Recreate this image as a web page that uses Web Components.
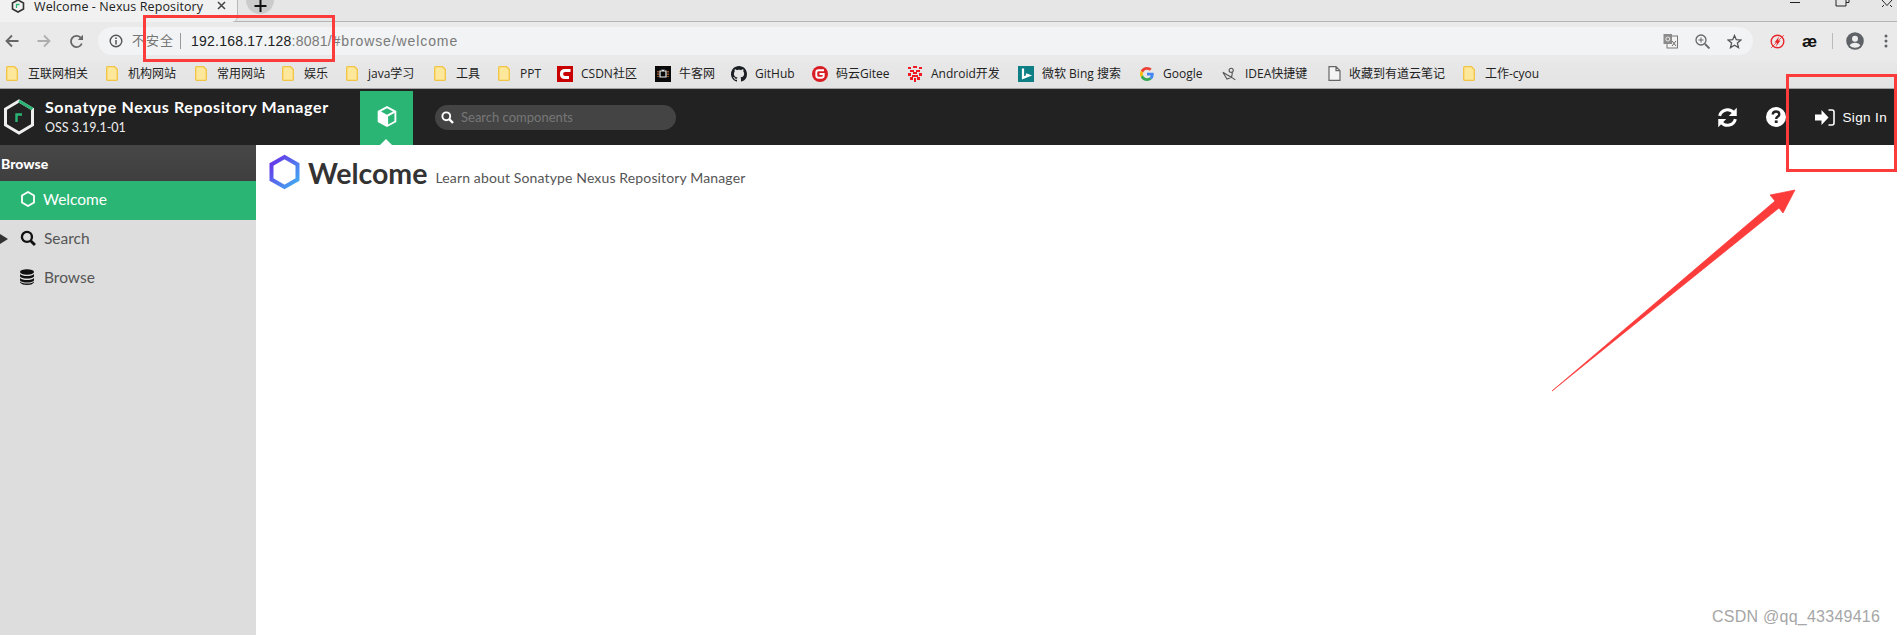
<!DOCTYPE html>
<html lang="en">
<head>
<meta charset="utf-8">
<title>Welcome - Nexus Repository Manager</title>
<style>
  html, body { margin: 0; height: 100%; overflow: hidden; background: #fff; }
  body { display: flex; flex-direction: column; height: 635px; position: relative; }
</style>
</head>
<body>
<browser-top></browser-top>
<bookmark-bar></bookmark-bar>
<nexus-header></nexus-header>
<nexus-main></nexus-main>
<shot-marks></shot-marks>

<script>
(function (w, doc) {
  'use strict';

  const CJK = '"Noto Sans CJK SC", sans-serif';
  const CHROME_FONT = '"Open Sans", ' + CJK;
  const NX_FONT = 'Lato, "Noto Sans", sans-serif';

  const folder = '<svg width="12" height="15" viewBox="0 0 12 15"><path d="M.7 1.5Q.7.7 1.5.7H8.5L11.3 3.5V13.5Q11.3 14.3 10.5 14.3H1.5Q.7 14.3.7 13.5Z" fill="#fde79a" stroke="#f2c443" stroke-width="1.3"/></svg>';

  const logos = {
    folder,
    csdn: '<svg width="16" height="16" viewBox="0 0 16 16"><rect width="16" height="16" fill="#c90000"/><path d="M13.5 4.5H8Q4.5 4.5 4.5 8T8 11.5H12" fill="none" stroke="#fff" stroke-width="3.2"/></svg>',
    nowcoder: '<svg width="16" height="16" viewBox="0 0 16 16"><rect width="16" height="16" fill="#0a0a0a"/><path d="M5 5H11V11H5Z" fill="none" stroke="#eee" stroke-width="1.2"/><path d="M3 5V11M13 5V11" stroke="#e9843a" stroke-width="1.2" stroke-dasharray="1.5 1"/><path d="M7 3.5L8 5L9 3.5" fill="none" stroke="#fff"/></svg>',
    github: '<svg width="16" height="16" viewBox="0 0 16 16"><path fill="#1b1f23" d="M8 0C3.58 0 0 3.58 0 8c0 3.54 2.29 6.53 5.47 7.59.4.07.55-.17.55-.38 0-.19-.01-.82-.01-1.49-2.01.37-2.53-.49-2.69-.94-.09-.23-.48-.94-.82-1.13-.28-.15-.68-.52-.01-.53.63-.01 1.08.58 1.23.82.72 1.21 1.87.87 2.33.66.07-.52.28-.87.51-1.07-1.78-.2-3.64-.89-3.64-3.95 0-.87.31-1.59.82-2.15-.08-.2-.36-1.02.08-2.12 0 0 .67-.21 2.2.82.64-.18 1.32-.27 2-.27s1.36.09 2 .27c1.53-1.04 2.2-.82 2.2-.82.44 1.1.16 1.92.08 2.12.51.56.82 1.27.82 2.15 0 3.07-1.87 3.75-3.65 3.95.29.25.54.73.54 1.48 0 1.07-.01 1.93-.01 2.2 0 .21.15.46.55.38A8.01 8.01 0 0 0 16 8c0-4.42-3.58-8-8-8z"/></svg>',
    gitee: '<svg width="16" height="16" viewBox="0 0 16 16"><circle cx="8" cy="8" r="8" fill="#d81e24"/><path d="M12 4.3H6.5Q4.3 4.3 4.3 6.5V9.5Q4.3 11.7 6.5 11.7H9.5Q11.7 11.7 11.7 9.5V8H7.5" fill="none" stroke="#fff" stroke-width="1.9"/></svg>',
    android: '<svg width="16" height="16" viewBox="0 0 16 16" fill="#ef1c25"><path d="M1 1h3v2H1zM6 0h4v2H6zM12 1h3v2h-3zM3 4h4v2H3zM9 4h4v2H9zM6 6h4v2H6zM1 7h3v3H1zM12 7h3v3h-3zM5 9h6v2H5zM3 11h3v3H3zM10 11h3v3h-3zM7 12h2v4H7z"/></svg>',
    bing: '<svg width="16" height="16" viewBox="0 0 16 16"><rect width="16" height="16" fill="#0f7f86"/><path d="M5 2.5V11.8L11 9.5L8 8.3" fill="none" stroke="#fff" stroke-width="2.2"/></svg>',
    google: '<svg width="14" height="14" viewBox="0 0 48 48"><path fill="#EA4335" d="M24 9.5c3.54 0 6.71 1.22 9.21 3.6l6.85-6.85C35.9 2.38 30.47 0 24 0 14.62 0 6.51 5.38 2.56 13.22l7.98 6.19C12.43 13.72 17.74 9.5 24 9.5z"/><path fill="#4285F4" d="M46.98 24.55c0-1.57-.15-3.09-.38-4.55H24v9.02h12.94c-.58 2.96-2.26 5.48-4.78 7.18l7.73 6c4.51-4.18 7.09-10.36 7.09-17.65z"/><path fill="#FBBC05" d="M10.53 28.59c-.48-1.45-.76-2.99-.76-4.59s.27-3.14.76-4.59l-7.98-6.19C.92 16.46 0 20.12 0 24c0 3.88.92 7.54 2.56 10.78l7.97-6.19z"/><path fill="#34A853" d="M24 48c6.48 0 11.93-2.13 15.89-5.81l-7.73-6c-2.15 1.45-4.92 2.3-8.16 2.3-6.26 0-11.57-4.22-13.47-9.91l-7.98 6.19C6.51 42.62 14.62 48 24 48z"/></svg>',
    idea: '<svg width="18" height="16" viewBox="0 0 18 16" fill="none" stroke="#555" stroke-width="1.3"><circle cx="11" cy="3.5" r="2.5"/><path d="M12.5 6L11.5 12L6 9L1 6M1 6L6 14L11.5 12L16 15"/></svg>',
    doc: '<svg width="13" height="15" viewBox="0 0 13 15"><path d="M1 .7H8L12 4.7V14.3H1Z M8 .7V4.7H12" fill="#f4f4f4" stroke="#666" stroke-width="1.2"/></svg>'
  };

  const tabTpl = doc.createElement('template');
  tabTpl.innerHTML = `
    <style>
      :host { display: block; height: 60px; background: #e6e6e6; font-family: ${CHROME_FONT}; position: relative; }
      .strip { height: 21px; display: flex; border-bottom: 1px solid #b4b4b4; }
      .tab { width: 238px; height: 22px; background: #f1f1f1; border-bottom-right-radius: 6px; display: flex; align-items: flex-start; box-sizing: border-box; padding-left: 11px; position: relative; z-index: 1; border-right: 1px solid #b8b8b8; margin-bottom: -1px; }
      .tab svg.fav { margin-right: 9px; margin-top: -1px; flex: none; }
      .tab .ttl { width: 168px; white-space: nowrap; font-size: 12.5px; line-height: 13px; color: #222; letter-spacing: .1px; }
      .tab .x { margin-left: 15px; margin-top: 1px; }
      .new { width: 28px; height: 14px; background: #cbcbcb; border-radius: 0 0 14px 14px; margin-left: 8px; display: flex; justify-content: center; }
      .win { margin-left: auto; display: flex; }
      .win svg { display: block; }
      .bar { display: flex; align-items: center; box-sizing: border-box; height: 39px; padding-bottom: 1px; position: relative; background: #eaeaea; }
      .nav { width: 98px; flex: none; position: relative; height: 28px; display: flex; align-items: center; padding-left: 5px; gap: 18px; box-sizing: border-box; }
      .omni { flex: none; width: 1655px; height: 28px; background: #f1f3f4; border-radius: 14px; display: flex; align-items: center; box-sizing: border-box; padding-left: 11px; }
      .warn { color: #757575; font-size: 13px; line-height: 16px; margin: 0 0 3px 9px; letter-spacing: 1px; }
      .sep { width: 1px; height: 16px; background: #999; margin: 0 10px 0 6px; }
      .url { font-size: 14px; font-family: "Liberation Sans", Arial, sans-serif; letter-spacing: .23px; color: #222; white-space: nowrap; }
      .url span { color: #7a7a7a; }
      .url i { font-style: normal; letter-spacing: .9px; }
      .tools { margin-left: auto; display: flex; align-items: center; gap: 17px; padding-right: 11px; }
      .ext { position: absolute; left: 1770px; top: 5px; height: 28px; display: flex; align-items: center; }
      .ae { font: bold 17px "Liberation Sans", sans-serif; color: #111; margin-left: 17px; line-height: 1; }
      .vline { width: 1px; height: 16px; background: #bbb; margin: 0 13px 0 15px; }
    </style>
    <div class="strip">
      <div class="tab">
        <svg class="fav" width="14" height="14" viewBox="0 0 14 14"><path d="M7 1L12.5 4V10L7 13L1.5 10V4Z" fill="none" stroke="#333" stroke-width="1.6"/><path d="M5.5 9V5.5H8.5" fill="none" stroke="#2ab574" stroke-width="1.3"/></svg>
        <div class="ttl">Welcome - Nexus Repository</div>
        <svg class="x" width="9" height="9" viewBox="0 0 9 9"><path d="M1 1L8 8M8 1L1 8" stroke="#444" stroke-width="1.5"/></svg>
      </div>
      <div class="new"><svg width="13" height="13" viewBox="0 0 13 13"><path d="M6.5 0V12M.5 6H12.5" stroke="#111" stroke-width="2"/></svg></div>
      <div class="win">
        <svg width="297" height="12" viewBox="0 0 297 12"><path d="M190 2.5H200" stroke="#222"/><path d="M236 0V6H246V0M246 2.5H249V0" fill="none" stroke="#222"/><path d="M282 0L287 5.5L292 0M282 7L284 5M292 7L290 5" fill="none" stroke="#222"/></svg>
      </div>
    </div>
    <div class="bar">
      <div class="nav">
        <svg width="14" height="14" viewBox="0 0 14 14"><path d="M13.5 7H2M7 1.5L1.5 7L7 12.5" fill="none" stroke="#666" stroke-width="1.8"/></svg>
        <svg width="14" height="14" viewBox="0 0 14 14"><path d="M.5 7H12M7 1.5L12.5 7L7 12.5" fill="none" stroke="#aeaeae" stroke-width="1.8"/></svg>
        <svg width="15" height="15" viewBox="0 0 15 15"><path d="M12.8 9.5A5.6 5.6 0 1 1 11.5 3.5" fill="none" stroke="#666" stroke-width="1.8"/><path d="M14 .8V6H8.8Z" fill="#666"/></svg>
      </div>
      <div class="omni">
        <svg width="14" height="14" viewBox="0 0 14 14"><circle cx="7" cy="7" r="5.8" fill="none" stroke="#555" stroke-width="1.4"/><path d="M7 6V10.5" stroke="#555" stroke-width="1.5"/><circle cx="7" cy="4.2" r=".9" fill="#555"/></svg>
        <span class="warn">不安全</span>
        <span class="sep"></span>
        <span class="url">192.168.17.128<span>:8081<i>/#browse/welcome</i></span></span>
        <div class="tools">
          <svg width="15" height="15" viewBox="0 0 15 15"><rect x="4" y="2" width="10.5" height="12" fill="#f3f3f3" stroke="#777"/><rect x=".5" y="0" width="8.5" height="10" fill="#8b8b8b"/><circle cx="4.8" cy="5" r="2" fill="none" stroke="#eee"/><path d="M9 7L13 12M13 7L9 12" stroke="#666"/></svg>
          <svg width="15" height="15" viewBox="0 0 15 15"><circle cx="6" cy="6" r="5" fill="none" stroke="#666" stroke-width="1.3"/><path d="M10 10L14.5 14.5" stroke="#666" stroke-width="1.8"/><path d="M3.5 6H8.5M6 3.5V8.5" stroke="#666"/></svg>
          <svg width="15" height="15" viewBox="0 0 15 15"><path d="M7.5 1.5L9.3 5.7L13.9 6.1L10.4 9.1L11.5 13.6L7.5 11.2L3.5 13.6L4.6 9.1L1.1 6.1L5.7 5.7Z" fill="none" stroke="#555" stroke-width="1.3"/></svg>
        </div>
      </div>
      <div class="ext">
        <svg width="15" height="15" viewBox="0 0 15 15"><circle cx="7.5" cy="7.5" r="6.3" fill="none" stroke="#e8262a" stroke-width="1.4"/><path d="M9 2.5L4.5 8.5H7L6 12.5L10.5 6.5H8Z" fill="#e8262a"/><path d="M1 14L14 1" stroke="#e8262a" stroke-width=".7"/></svg>
        <span class="ae">æ</span>
        <span class="vline"></span>
        <svg width="18" height="18" viewBox="0 0 18 18"><circle cx="9" cy="9" r="8.8" fill="#5f6368"/><circle cx="9" cy="6.8" r="3" fill="#eee"/><path d="M3.7 13.5Q5 10.8 9 10.8T14.3 13.5Q12.5 15.8 9 15.8T3.7 13.5Z" fill="#eee"/></svg>
        <svg style="margin-left:20px" width="4" height="14" viewBox="0 0 4 14" fill="#5f6368"><circle cx="2" cy="2" r="1.5"/><circle cx="2" cy="7" r="1.5"/><circle cx="2" cy="12" r="1.5"/></svg>
      </div>
    </div>`;

  class BrowserTop extends HTMLElement {
    constructor() {
      super();
      this.attachShadow({ mode: 'open' }).appendChild(tabTpl.content.cloneNode(true));
    }
  }
  customElements.define('browser-top', BrowserTop);

  class BookMark extends HTMLElement {
    constructor() {
      super();
      const root = this.attachShadow({ mode: 'open' });
      root.innerHTML = `
        <style>
          :host { display: flex; align-items: center; flex: none; height: 16px; gap: 8px; font: 12px/16px ${CHROME_FONT}; color: #222; white-space: nowrap; }
          .ic { display: flex; width: var(--ic, 16px); flex: none; }
        </style>
        <span class="ic"></span><slot></slot>`;
    }
    connectedCallback() {
      const kind = this.getAttribute('icon');
      this.shadowRoot.querySelector('.ic').innerHTML = logos[kind] || '';
      this.style.setProperty('--ic', (this.getAttribute('iw') || 16) + 'px');
      this.style.width = this.getAttribute('w') + 'px';
    }
  }
  customElements.define('book-mark', BookMark);

  // name, icon, slot width to the next bookmark, icon box
  const marks = [
    ['互联网相关', 'folder', 100, 14], ['机构网站', 'folder', 89, 14], ['常用网站', 'folder', 87, 14],
    ['娱乐', 'folder', 64, 14], ['java学习', 'folder', 88, 14], ['工具', 'folder', 64, 14],
    ['PPT', 'folder', 59, 14], ['CSDN社区', 'csdn', 98, 16], ['牛客网', 'nowcoder', 76, 16],
    ['GitHub', 'github', 81, 16], ['码云Gitee', 'gitee', 95, 16], ['Android开发', 'android', 111, 16],
    ['微软 Bing 搜索', 'bing', 122, 16], ['Google', 'google', 82, 15], ['IDEA快捷键', 'idea', 106, 15],
    ['收藏到有道云笔记', 'doc', 135, 13], ['工作-cyou', 'folder', 90, 14]
  ];

  class BookmarkBar extends HTMLElement {
    constructor() {
      super();
      const root = this.attachShadow({ mode: 'open' });
      root.innerHTML = `
        <style>
          :host { display: flex; align-items: center; flex: none; box-sizing: border-box; height: 29px; padding: 0 0 1px 6px; background: linear-gradient(#e8e8e8, #e3e3e3); border-bottom: 1px solid #a3a3a3; }
        </style>`;
      marks.forEach((m) => {
        const el = doc.createElement('book-mark');
        el.setAttribute('icon', m[1]);
        el.setAttribute('w', m[2]);
        el.setAttribute('iw', m[3]);
        el.textContent = m[0];
        root.appendChild(el);
      });
    }
  }
  customElements.define('bookmark-bar', BookmarkBar);

  const headTpl = doc.createElement('template');
  headTpl.innerHTML = `
    <style>
      :host { display: flex; flex: none; height: 56px; background: #222; color: #fff; font-family: ${NX_FONT}; align-items: center; }
      .logo { width: 45px; flex: none; display: flex; padding-left: 3px; box-sizing: border-box; }
      .brand { width: 315px; flex: none; }
      .brand b { display: block; font-size: 16px; line-height: 18px; font-weight: 700; letter-spacing: .62px; }
      .brand span { display: block; font-size: 12.5px; line-height: 16px; margin-top: 4px; color: #eee; }
      .cube { width: 53px; height: 54px; align-self: flex-end; background: #2ab574; flex: none; display: flex; align-items: center; justify-content: center; position: relative; padding-bottom: 4px; box-sizing: border-box; }
      .cube::after { content: ""; position: absolute; left: 20px; bottom: 0; border: 6px solid transparent; border-top: 0; border-bottom-color: #fff; }
      .find { margin-left: 22px; width: 241px; height: 25px; border-radius: 13px; background: #444; display: flex; align-items: center; padding-left: 6px; box-sizing: border-box; gap: 7px; font-size: 13px; color: #777; }
      .right { margin-left: auto; display: flex; align-items: center; }
      .signin { font: 13.5px "Liberation Sans", sans-serif; margin: 0 10px 0 8px; letter-spacing: .35px; }
    </style>
    <div class="logo">
      <svg width="32" height="36" viewBox="0 0 32 36"><path d="M16 2L29.5 10V26L16 34L2.5 26V10Z" fill="none" stroke="#eee" stroke-width="3"/><path d="M16 2L29.5 10" stroke="#2ab574" stroke-width="3"/><path d="M13.5 23V15.5H19" fill="none" stroke="#2ab574" stroke-width="2.4"/></svg>
    </div>
    <div class="brand"><b>Sonatype Nexus Repository Manager</b><span>OSS 3.19.1-01</span></div>
    <div class="cube">
      <svg width="22" height="23" viewBox="0 0 20 21"><path d="M10 1L18.5 5.5V15.5L10 20L1.5 15.5V5.5Z" fill="#fff"/><path d="M10 3L15.5 6L10 9L4.5 6Z" fill="#2ab574"/><path d="M11 10.5L16.8 7.3V14.5L11 17.7Z" fill="#2ab574"/></svg>
    </div>
    <div class="find">
      <svg width="13" height="13" viewBox="0 0 13 13"><circle cx="5.3" cy="5.3" r="3.9" fill="none" stroke="#fff" stroke-width="1.9"/><path d="M8.2 8.2L12 12" stroke="#fff" stroke-width="2.4"/></svg>
      Search components
    </div>
    <div class="right">
      <svg width="21" height="21" viewBox="0 0 20 20" fill="none"><path d="M2.5 8.5A7.7 7.7 0 0 1 16 5.5" stroke="#fff" stroke-width="2.9"/><path d="M18.8 .8V8.5H11.2Z" fill="#fff"/><path d="M17.5 11.5A7.7 7.7 0 0 1 4 14.5" stroke="#fff" stroke-width="2.9"/><path d="M1.2 19.2V11.5H8.8Z" fill="#fff"/></svg>
      <svg style="margin-left:28px" width="20" height="20" viewBox="0 0 20 20"><circle cx="10" cy="10" r="10" fill="#fff"/><path d="M6.7 7.5Q7 4.5 10.1 4.5Q13.3 4.5 13.3 7.2Q13.3 8.7 11.7 9.6Q10.2 10.5 10.2 12" fill="none" stroke="#222" stroke-width="2.4"/><rect x="8.8" y="13.4" width="2.8" height="2.6" fill="#222"/></svg>
      <svg style="margin-left:29px" width="20" height="17" viewBox="0 0 20 17"><path d="M0 5.5H6.5V1L13.5 8.5L6.5 16V11.5H0Z" fill="#fff"/><path d="M13.5 1H17Q19 1 19 3V14Q19 16 17 16H13.5" fill="none" stroke="#fff" stroke-width="1.6"/></svg>
      <span class="signin">Sign In</span>
    </div>`;

  class NexusHeader extends HTMLElement {
    constructor() {
      super();
      this.attachShadow({ mode: 'open' }).appendChild(headTpl.content.cloneNode(true));
    }
  }
  customElements.define('nexus-header', NexusHeader);

  class NavItem extends HTMLElement {
    constructor() {
      super();
      const root = this.attachShadow({ mode: 'open' });
      root.innerHTML = `
        <style>
          :host { display: flex; align-items: center; height: 39px; padding: 0 0 3px 20px; gap: 8px; font-size: 15.5px; color: #555; position: relative; box-sizing: border-box; }
          :host([active]) { background: #2ab574; color: #fff; gap: 7px; }
          :host([arrow]) { padding-bottom: 4px; }
          :host([arrow])::before { content: ""; position: absolute; left: 0; top: 14px; border: 5px solid transparent; border-left: 8px solid #333; border-right: 0; }
          .ic { width: 16px; height: 16px; display: flex; }
        </style>
        <span class="ic"><slot name="icon"></slot></span><slot></slot>`;
    }
  }
  customElements.define('nav-item', NavItem);

  const mainTpl = doc.createElement('template');
  mainTpl.innerHTML = `
    <style>
      :host { display: flex; flex: 1; min-height: 0; font-family: ${NX_FONT}; }
      .side { width: 256px; flex: none; background: #ddd; }
      .side h3 { margin: 0; height: 36px; box-sizing: border-box; padding-left: 1px; background: linear-gradient(#474747, #3f3f3f); color: #fff; font-size: 14px; line-height: 38px; font-weight: 900; }
      .page { flex: 1; background: #fff; padding: 9px 0 0 13px; }
      .ttl { display: flex; align-items: flex-end; gap: 7px; height: 36px; }
      .ttl svg { margin-right: 1px; flex: none; }
      .ttl h1 { margin: 0; font-size: 28.5px; line-height: 34px; font-weight: 700; color: #333; padding-right: 1px; }
      .ttl p { margin: 0 0 4px; font-size: 14px; line-height: 16px; color: #555; letter-spacing: .14px; }
    </style>
    <div class="side">
      <h3>Browse</h3>
      <nav-item active><svg slot="icon" width="16" height="16" viewBox="0 0 16 16"><path d="M8 1L14 4.5V11.5L8 15L2 11.5V4.5Z" fill="none" stroke="#fff" stroke-width="1.8"/></svg>Welcome</nav-item>
      <nav-item arrow><svg slot="icon" width="16" height="16" viewBox="0 0 15 15"><circle cx="6.5" cy="6.5" r="4.7" fill="none" stroke="#111" stroke-width="2.2"/><path d="M10 10L14 14" stroke="#111" stroke-width="2.7"/></svg>Search</nav-item>
      <nav-item><svg slot="icon" width="14" height="16" viewBox="0 0 14 16" fill="#111"><ellipse cx="7" cy="3" rx="7" ry="2.7"/><path d="M0 5Q2 7 7 7T14 5V7.5Q12 9.5 7 9.5T0 7.5ZM0 9Q2 11 7 11T14 9V11.5Q12 13.5 7 13.5T0 11.5ZM0 12.5Q2 14.5 7 14.5T14 12.5V13.5Q12 16 7 16T0 13.5Z"/></svg>Browse</nav-item>
    </div>
    <div class="page">
      <div class="ttl">
        <svg width="31" height="36" viewBox="0 0 31 35"><defs><linearGradient id="hx" x1="0" y1="0" x2="1" y2="1"><stop offset="0" stop-color="#6a2be8"/><stop offset="1" stop-color="#3fb2f2"/></linearGradient></defs><path d="M15.5 2.5L28.5 10V25L15.5 32.5L2.5 25V10Z" fill="none" stroke="url(#hx)" stroke-width="4"/></svg>
        <h1>Welcome</h1>
        <p>Learn about Sonatype Nexus Repository Manager</p>
      </div>
    </div>`;

  class NexusMain extends HTMLElement {
    constructor() {
      super();
      this.attachShadow({ mode: 'open' }).appendChild(mainTpl.content.cloneNode(true));
    }
  }
  customElements.define('nexus-main', NexusMain);

  // the red boxes, the arrow and the watermark lie over the screenshot
  const marksTpl = doc.createElement('template');
  marksTpl.innerHTML = `
    <style>
      :host { display: block; position: absolute; inset: 0; z-index: 10; pointer-events: none; }
      .box { position: absolute; box-sizing: border-box; border: 3px solid #fc3b3b; }
      svg { position: absolute; left: 0; top: 0; }
      .wm { position: absolute; left: 1712px; top: 608px; font: 16px/18px "Liberation Sans", sans-serif; color: #a6a6a6; white-space: nowrap; letter-spacing: .25px; }
    </style>
    <div class="box" style="left:143px;top:15px;width:192px;height:47px"></div>
    <div class="box" style="left:1786px;top:74px;width:111px;height:98px"></div>
    <svg width="1897" height="635"><path d="M1552 391L1775 201L1770 195L1795 190L1783 213L1779 208Z" fill="#fc3b3b" stroke="#fc3b3b" stroke-width=".7"/></svg>
    <div class="wm">CSDN @qq_43349416</div>`;

  class ShotMarks extends HTMLElement {
    constructor() {
      super();
      this.attachShadow({ mode: 'open' }).appendChild(marksTpl.content.cloneNode(true));
    }
  }
  customElements.define('shot-marks', ShotMarks);

})(window, document);
</script>
</body>
</html>
